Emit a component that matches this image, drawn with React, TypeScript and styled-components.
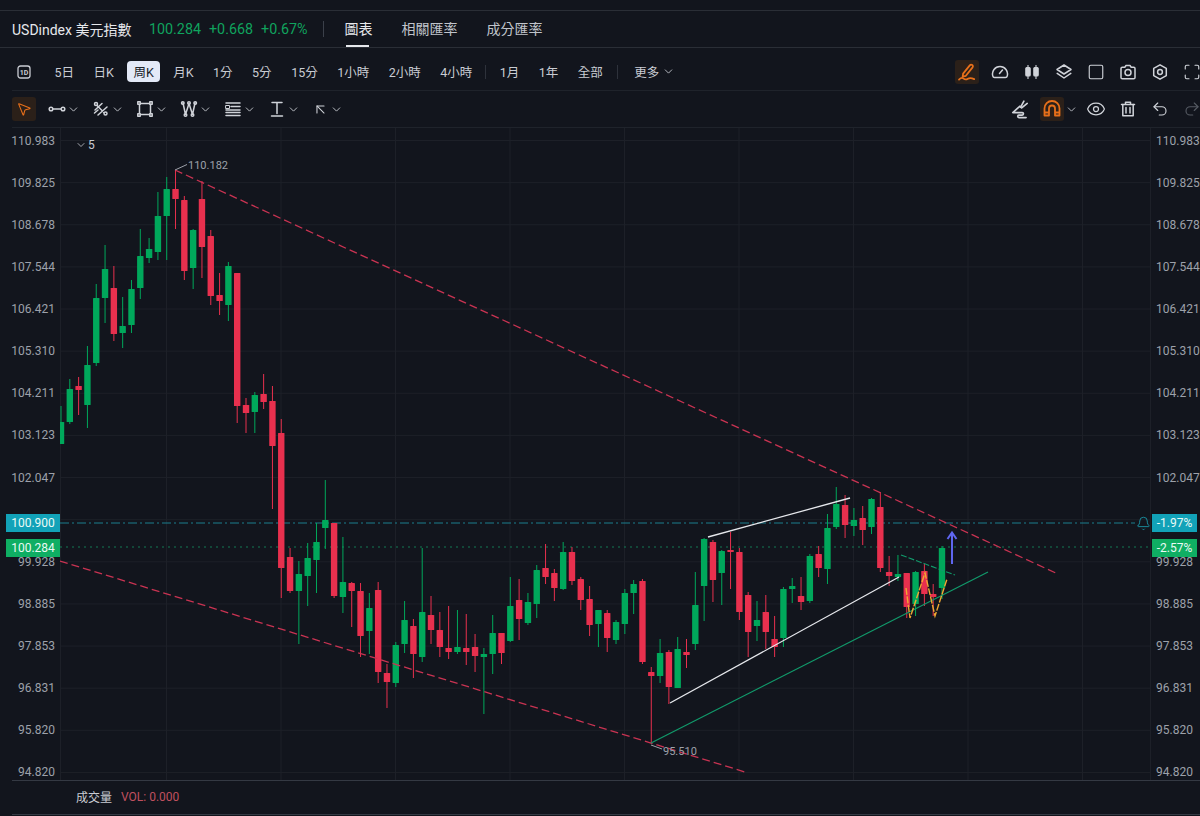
import React from "react";
import styled, { createGlobalStyle } from "styled-components";
import { Bell, ChevronDown, Eye, Maximize, MousePointer2, Redo2, Square, Undo2, ArrowUpLeft } from "lucide-react";

const GREEN = "#00a85b";
const RED = "#e8304e";
const GlobalStyle = createGlobalStyle`
  html, body { margin: 0; background: #12151d; overflow: hidden; }
  * { box-sizing: border-box; }
`;
const Page = styled.div`
  width: 1200px; height: 816px; background: #12151d; color: #d5d8de; position: relative; overflow: hidden;
  font-family: Roboto, "Noto Sans CJK TC", sans-serif; display: flex; flex-direction: column; padding-top: 10px;
`;
const Header = styled.header`
  height: 38px; border-top: 1px solid #2a2e36; border-bottom: 1px solid #2a2e36;
  display: flex; align-items: center; padding-left: 12px;
`;
const Symbol = styled.span`font-size: 14px; color: #e6e8ec; width: 137px;`;
const Quote = styled.span`font-size: 14.3px; color: #10a35e; margin-right: 8px;`;
const HeaderDivider = styled.span`width: 1px; height: 16px; background: #3b404a; margin: 0 20px 0 8px;`;
const Tab = styled.span<{ $active?: boolean }>`
  height: 100%; display: flex; align-items: center; font-size: 14px; margin-right: 29px; position: relative; padding-bottom: 3px;
  color: ${p => (p.$active ? "#e6e8ec" : "#c0c4cb")};
  &::after { content: ""; display: ${p => (p.$active ? "block" : "none")}; position: absolute; left: 2px; right: 3px; bottom: 0; height: 2px; background: #e6e8ec; }
`;
const Toolbar = styled.div<{ $h: number; $top?: number }>`
  height: ${p => p.$h}px; display: flex; align-items: center; margin: 0 -8px 0 12px; padding-top: ${p => p.$top ?? 0}px;
  border-bottom: 1px solid #1f232b;
`;
const Period = styled.span<{ $active?: boolean }>`
  height: 21px; padding: 0 6px; margin-right: 7.5px; border-radius: 4px; display: flex; align-items: center;
  font-size: 12.5px; color: ${p => (p.$active ? "#20242c" : "#c9ccd3")}; background: ${p => (p.$active ? "#e3e9f7" : "transparent")};
`;
const PeriodIcon = styled.span`width: 28px; padding-left: 5px; margin-right: 8.5px; display: flex; color: #c9ccd3;`;
const BarDivider = styled.span<{ $before: number; $after: number }>`
  width: 1px; height: 14px; background: #2e323b; margin: 0 ${p => p.$after}px 0 ${p => p.$before}px;
`;
const Spacer = styled.div`flex: 1;`;
const IconBtn = styled.span<{ $dim?: boolean }>`
  width: 32px; height: 24px; display: flex; align-items: center; justify-content: center; flex: none;
  color: ${p => (p.$dim ? "#555a63" : "#d0d3d9")};
`;
const Gap = styled.span<{ $w: number }>`width: ${p => p.$w}px; flex: none;`;
const ChevronSlot = styled.span`width: 14px; display: flex; justify-content: center; color: #c9ccd3; flex: none;`;
const ActiveBox = styled.span`
  width: 24px; height: 24px; border-radius: 3px; background: #2b2019; color: #e8701a;
  display: flex; align-items: center; justify-content: center; flex: none;
`;
const ToolGroup = styled.span`width: 44px; display: flex; align-items: center; color: #d0d3d9; flex: none; gap: 1px; padding-left: 3px;`;
const ChartRow = styled.div`
  height: 652px; display: grid; grid-template-columns: 60px 1091px 49px; position: relative;
`;
const Axis = styled.div<{ $right?: boolean }>`
  display: flex; flex-direction: column; justify-content: space-between; padding-top: 5px;
  align-items: ${p => (p.$right ? "flex-start" : "flex-end")};
  padding-${p => (p.$right ? "left" : "right")}: 5px;
`;
const Tick = styled.span`font-size: 12px; line-height: 16px; height: 16px; color: #9da1aa;`;
const Plot = styled.svg`display: block; width: 1091px; height: 652px;`;
const PriceTag = styled.span<{ $bg: string; $top: number; $right?: boolean }>`
  position: absolute; top: ${p => p.$top}px; height: 18px; background: ${p => p.$bg}; color: #eafaf5; font-size: 12px;
  display: flex; align-items: center; justify-content: center;
  ${p => (p.$right ? "left: 1152px; width: 45px;" : "left: 6px; width: 54px;")}
`;
const BellMark = styled.span`position: absolute; left: 1136px; top: 388px; color: #1a98aa; display: flex;`;
const SeriesToggle = styled.span`
  position: absolute; left: 75px; top: 10px; display: flex; align-items: center; gap: 1px; font-size: 12px; color: #c9ccd3;
`;
const VolumeBar = styled.div`
  height: 35px; margin-left: 12px; border-top: 1px solid #343943; border-bottom: 1px solid #343943;
  display: flex; align-items: center; padding: 0 0 2px 64px; gap: 9px; font-size: 12px;
`;
const VolName = styled.span`color: #c9ccd3;`;
const VolValue = styled.span`color: #c0505f;`;

type C = [string, number, number, number, number];
const candles: C[] = [
  ["g",405,421,443,443],["g",378,388,421,423],["r",376,385,389,414],["g",345,364,404,427],["g",283,297,362,365],
  ["g",244,268,297,322],["r",265,287,333,340],["g",296,325,332,347],["g",279,288,324,332],["g",228,255,287,298],
  ["g",237,248,257,262],["g",191,215,251,259],["g",176,188,215,259],["r",169,188,198,228],["r",195,199,270,279],
  ["g",228,229,267,288],["r",180,198,246,277],["r",229,235,295,304],["r",272,294,300,314],["g",261,265,304,320],
  ["r",272,272,405,422],["r",397,404,412,432],["g",391,394,411,432],["r",373,393,401,408],["r",385,400,445,508],
  ["r",418,432,567,597],["r",547,556,590,592],["g",560,573,590,643],["g",542,557,575,605],["g",522,541,559,592],
  ["g",479,519,527,548],["r",522,522,595,597],["g",536,581,596,612],["r",581,582,590,626],["r",582,590,635,656],
  ["g",592,607,630,653],["r",581,589,671,682],["r",663,672,681,707],["g",641,644,682,686],["g",600,619,643,652],
  ["r",618,625,653,677],["g",547,611,656,661],["r",595,614,629,643],["r",611,629,646,656],["r",605,647,651,658],
  ["g",609,646,651,653],["r",613,647,651,664],["r",633,646,655,671],["g",647,653,656,713],["g",614,632,653,673],
  ["r",632,632,652,663],["g",576,605,640,641],["r",578,599,618,639],["g",592,601,622,624],["g",564,569,603,617],
  ["r",543,567,576,583],["r",568,572,587,600],["g",541,551,588,589],["r",546,551,580,584],["r",576,578,599,609],
  ["r",585,598,624,635],["g",609,609,623,646],["r",609,612,637,651],["g",619,621,639,643],["g",588,592,623,633],
  ["g",579,583,592,613],["r",578,580,661,663],["r",666,671,675,742],["g",638,652,675,682],["r",649,651,686,703],
  ["g",636,648,687,687],["r",638,651,654,667],["g",571,604,643,649],["g",537,538,585,620],["r",539,541,579,601],
  ["g",549,550,572,604],["r",531,549,551,588],["r",547,551,611,619],["r",591,594,631,656],["g",600,619,625,640],
  ["r",594,611,631,648],["r",615,638,646,656],["g",586,588,637,646],["g",577,585,588,602],["r",576,595,601,609],
  ["g",553,555,600,602],["r",545,553,567,576],["g",513,527,568,583],["g",486,503,526,528],["r",494,504,524,537],
  ["g",507,519,525,535],["r",505,517,529,544],["g",497,498,526,533],["r",491,506,567,571],["r",555,571,575,585],
  ["g",554,573,576,580],["r",572,572,606,617],["g",570,571,603,615],["r",563,570,593,605],["r",583,593,596,615],
  ["g",545,547,587,598],
];
const ticks = ["110.983","109.825","108.678","107.544","106.421","105.310","104.211","103.123","102.047","","99.928","98.885","97.853","96.831","95.820","94.820"];
const gridY = Array.from({ length: 16 }, (_, i) => 139.5 + i * 42.13);
const gridX = [60.5, 166.5, 281, 395.5, 510, 624.5, 739, 853.5, 968, 1082.5];

const Svg: React.FC<{ s?: number; w?: number; children: React.ReactNode }> = ({ s = 18, w = 1.5, children }) => (
  <svg width={s} height={s} viewBox="0 0 18 18" fill="none" stroke="currentColor" strokeWidth={w} strokeLinecap="round" strokeLinejoin="round">{children}</svg>
);
const OneD = () => (
  <svg width={14} height={14} viewBox="0 0 14 14" fill="none" stroke="currentColor">
    <rect x="1" y="1" width="12" height="12" rx="2.5" strokeWidth="1.3" />
    <text x="7" y="9.6" textAnchor="middle" fontSize="7" fontFamily="Roboto" fontWeight="700" stroke="none" fill="currentColor">1D</text>
  </svg>
);
const PenSquiggle = () => (<Svg s={20} w={1.6}><path d="M5.500 10.500 11.500 3c.6-.7 1.500-.8 2.200-.3s.8 1.400.3 2.100L8 12.400l-2.900.8z" /><path d="M1.800 15.800c2-2 3-2 4.200-.9s2.300 1 3.800.1 3-.9 5.700.4" /></Svg>);
const GaugeIcon = () => (<Svg><path d="M3.500 14.500h11c1 0 1.500-.6 1.700-1.400A7.500 7.500 0 1 0 1.800 13.100c.2.800.7 1.400 1.700 1.400z" /><path d="M8.500 10.500 11.500 7" /></Svg>);
const Candles = () => (
  <svg width={18} height={18} viewBox="0 0 18 18" fill="currentColor" stroke="currentColor" strokeWidth="1.1">
    <path d="M5 2v14M13 2v14" /><rect x="2.800" y="4.500" width="4.400" height="8.500" rx="1" /><rect x="10.800" y="4.500" width="4.400" height="8.500" rx="1" />
  </svg>
);
const LayersIcon = () => (<Svg><path d="M9 2 16 6.500 9 11 2 6.500z" /><path d="M2.200 10.400 9 15l6.800-4.600" /></Svg>);
const CameraIcon = () => (<Svg><path d="M2 5.500c0-.8.600-1.300 1.300-1.300h2.500L7 2.500h4l1.200 1.700h2.500c.7 0 1.300.5 1.300 1.300v9c0 .8-.6 1.300-1.300 1.300H3.300c-.7 0-1.300-.5-1.300-1.300z" /><circle cx="9" cy="9.500" r="3" /></Svg>);
const HexGear = () => (<Svg><path d="M9 1.800 15.300 5.400v7.200L9 16.200 2.700 12.600V5.400z" /><circle cx="9" cy="9" r="2.400" /></Svg>);
const Scribble = () => (<Svg s={20}><path d="M9.500 7.500 12.500 2" /><path d="M10.500 8 15.500 4" /><path d="M9 6.500 2.500 12.200h8.500c1.500 0 1.500 2.300 0 2.300H8c-1.400 0-1.400 2.200 0 2.200h6.500" /></Svg>);
const TrashIcon = () => (<Svg><path d="M2.500 4.500h13M6.500 4.500V2.200h5v2.300" /><path d="M3.800 4.500v11.300h10.400V4.500" /><path d="M7 7.500v5.500M11 7.500v5.500" /></Svg>);
const MagnetArch = () => (
  <svg width={20} height={20} viewBox="0 0 20 20" fill="none" stroke="currentColor" strokeWidth="1.800" strokeLinejoin="round">
    <path d="M2.500 16.500V9.500a7.500 7.500 0 0 1 15 0v7h-4.500V9.500a3 3 0 0 0-6 0v7z" /><path d="M2.500 13.500H7M13 13.500h4.500" />
  </svg>
);
const LineTool = () => (<Svg><circle cx="3" cy="9" r="1.800" /><circle cx="15" cy="9" r="1.800" /><path d="M5 9h8" /></Svg>);
const ForkTool = () => (<Svg><circle cx="4" cy="4" r="1.500" /><circle cx="13.500" cy="13.500" r="1.500" /><path d="M5 5.500 12 12.500M3 10 10 3.500M6 15 15 7M2.500 13 6 10" /></Svg>);
const RectTool = () => (<Svg><rect x="3.500" y="3.500" width="11" height="11" /><rect x="1.800" y="1.800" width="2.400" height="2.400" fill="#12151d" /><rect x="13.800" y="1.800" width="2.400" height="2.400" fill="#12151d" /><rect x="1.800" y="13.800" width="2.400" height="2.400" fill="#12151d" /><rect x="13.800" y="13.800" width="2.400" height="2.400" fill="#12151d" /></Svg>);
const PatternTool = () => (<Svg><path d="M3 3 5.500 14.500 9 3.500 12.500 14.500 15 3" /><circle cx="2.800" cy="3" r="1.300" /><circle cx="15.200" cy="3" r="1.300" /><circle cx="5.500" cy="15" r="1.300" /><circle cx="12.500" cy="15" r="1.300" /><circle cx="9" cy="3" r="1.300" /></Svg>);
const FibTool = () => (<Svg><path d="M2 3h14M7 6.500h9M2 10h14M2 12.500h14M2 15.500h14" /><rect x="2" y="5.500" width="3.500" height="3" strokeWidth="1" /></Svg>);
const TextTool = () => (<Svg><path d="M4 2.500h10M9 2.500v11" /><path d="M3.500 16h11" /></Svg>);

const Chev = () => <ChevronDown size={13} strokeWidth={1.6} />;
const toolIcons = [LineTool, ForkTool, RectTool, PatternTool, FibTool, TextTool];

export default function App() {
  return (
    <Page>
      <GlobalStyle />
      <Header>
        <Symbol>USDindex 美元指數</Symbol>
        <Quote>100.284</Quote><Quote>+0.668</Quote><Quote>+0.67%</Quote>
        <HeaderDivider />
        <Tab $active>圖表</Tab><Tab>相關匯率</Tab><Tab>成分匯率</Tab>
      </Header>
      <Toolbar $h={43} $top={5}>
        <PeriodIcon><OneD /></PeriodIcon>
        {["5日","日K","周K","月K","1分","5分","15分","1小時","2小時","4小時"].map(l => <Period key={l} $active={l === "周K"}>{l}</Period>)}
        <BarDivider $before={-1} $after={8} />
        {["1月","1年","全部"].map(l => <Period key={l}>{l}</Period>)}
        <BarDivider $before={1} $after={10} />
        <Period>更多&nbsp;<Chev /></Period>
        <Spacer />
        <ActiveBox><PenSquiggle /></ActiveBox>
        <Gap $w={5} />
        <IconBtn><GaugeIcon /></IconBtn>
        <IconBtn><Candles /></IconBtn>
        <IconBtn><LayersIcon /></IconBtn>
        <IconBtn><Square size={18} strokeWidth={1.5} /></IconBtn>
        <IconBtn><CameraIcon /></IconBtn>
        <IconBtn><HexGear /></IconBtn>
        <IconBtn><Maximize size={18} strokeWidth={1.5} /></IconBtn>
      </Toolbar>
      <Toolbar $h={37}>
        <ActiveBox><MousePointer2 size={16} strokeWidth={1.6} /></ActiveBox>
        <Gap $w={9} />
        {toolIcons.map((I, i) => <ToolGroup key={i}><I /><Chev /></ToolGroup>)}
        <ToolGroup><ArrowUpLeft size={17} strokeWidth={1.5} /><Chev /></ToolGroup>
        <Spacer />
        <IconBtn><Scribble /></IconBtn>
        <Gap $w={4} />
        <ActiveBox><MagnetArch /></ActiveBox>
        <ChevronSlot><Chev /></ChevronSlot>
        <Gap $w={2} />
        <IconBtn><Eye size={20} strokeWidth={1.5} /></IconBtn>
        <IconBtn><TrashIcon /></IconBtn>
        <IconBtn><Undo2 size={18} strokeWidth={1.5} /></IconBtn>
        <IconBtn $dim><Redo2 size={18} strokeWidth={1.5} /></IconBtn>
      </Toolbar>
      <ChartRow>
        <Axis>{ticks.map((t, i) => <Tick key={i}>{t || "\u00a0"}</Tick>)}</Axis>
        <Plot viewBox="60 127 1091 652">
          {gridY.map(y => <line key={y} x1={60} x2={1151} y1={y} y2={y} stroke="#1d2028" />)}
          {gridX.map(x => <line key={x} x1={x} x2={x} y1={127} y2={779} stroke="#1d2028" />)}
          <line x1={1150.5} x2={1150.5} y1={127} y2={779} stroke="#1d2028" />
          <line x1={60} x2={1135} y1={522} y2={522} stroke="#1b7f8e" strokeDasharray="9 3 2 3" />
          <line x1={60} x2={1150} y1={546} y2={546} stroke="#127a55" strokeDasharray="2 4" />
          {candles.map(([c, wt, bt, bb, wb], k) => {
            const x = 61 + 8.81 * k;
            const col = c === "g" ? GREEN : RED;
            return (
              <g key={k} fill={col} stroke={col}>
                <line x1={x} x2={x} y1={wt} y2={wb} strokeWidth={1} />
                <rect x={x - 3.2} y={bt} width={6.4} height={Math.max(bb - bt, 2)} rx={0.6} stroke="none" />
              </g>
            );
          })}
          <line x1={175} y1={169} x2={1058} y2={573} stroke="#c93352" strokeWidth={1.3} strokeDasharray="8 4" />
          <line x1={60} y1={560} x2={745} y2={771} stroke="#c93352" strokeWidth={1.3} strokeDasharray="8 4" />
          <line x1={651} y1={742} x2={988} y2={571} stroke="#119a6b" strokeWidth={1.2} />
          <line x1={670} y1={702} x2={899} y2={576} stroke="#e6e8ec" strokeWidth={1.3} />
          <line x1={708} y1={536} x2={850} y2={497} stroke="#e6e8ec" strokeWidth={1.3} />
          <line x1={901} y1={554} x2={955} y2={574} stroke="#119a6b" strokeWidth={1.1} strokeDasharray="6 2" />
          <polyline points="906,587 910,617 925,572 935,615 947,578" fill="none" stroke="#f0a832" strokeWidth={1.4} strokeDasharray="7 1.500" />
          <path d="M952 563V531M947.500 538 952 531.500 956.500 538" fill="none" stroke="#5f66f0" strokeWidth={2} />
          <path d="M175 169 187 163.500M651 744 662 748" stroke="#9da1aa" strokeWidth={1} />
          <text x={188} y={167.500} fontSize={11} fill="#9da1aa" fontFamily="Roboto">110.182</text>
          <text x={663} y={753.500} fontSize={11} fill="#9da1aa" fontFamily="Roboto">95.510</text>
        </Plot>
        <Axis $right>{ticks.map((t, i) => <Tick key={i}>{t || "\u00a0"}</Tick>)}</Axis>
        <SeriesToggle><ChevronDown size={12} strokeWidth={1.6} />5</SeriesToggle>
        <PriceTag $bg="#12a2b8" $top={386}>100.900</PriceTag>
        <PriceTag $bg="#0fae63" $top={411}>100.284</PriceTag>
        <PriceTag $bg="#12a2b8" $top={386} $right>-1.97%</PriceTag>
        <PriceTag $bg="#0fae63" $top={411} $right>-2.57%</PriceTag>
        <BellMark><Bell size={15} strokeWidth={1.4} /></BellMark>
      </ChartRow>
      <VolumeBar><VolName>成交量</VolName><VolValue>VOL: 0.000</VolValue></VolumeBar>
    </Page>
  );
}
